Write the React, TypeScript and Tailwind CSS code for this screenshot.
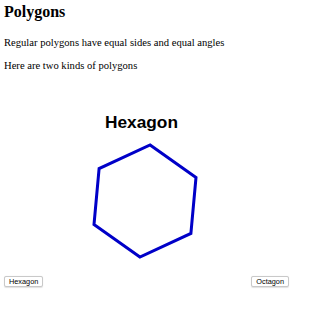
const hexPoints = '146.1,10 192,42.4 186.9,98.4 135.9,122 90,89.6 95.1,33.6'

const ShapeButton = ({ label }: { label: string }) => {
  return (
    <button className="h-[11px] px-[4px] border border-[#c9c9c9] rounded-[2px] bg-white text-[7.33px] leading-[9px] text-black shadow-[0_0.5px_1px_rgba(0,0,0,0.12)] font-['Liberation_Sans',Arial,sans-serif]">
      {label}
    </button>
  )
}

export default function App() {
  return (
    <div className="w-[318px] h-[320px] bg-white pl-[4px] text-black overflow-hidden">
      <h2 className="pt-[3px] text-[16px] leading-[18px] font-bold font-['Liberation_Serif','Times_New_Roman',serif]">
        Polygons
      </h2>

      <p className="mt-[16px] text-[10.6px] leading-[12px] font-['Liberation_Serif','Times_New_Roman',serif]">
        Regular polygons have equal sides and equal angles
      </p>
      <p className="mt-[10.6px] text-[10.6px] leading-[12px] font-['Liberation_Serif','Times_New_Roman',serif]">
        Here are two kinds of polygons
      </p>

      <div className="w-[285px] mt-[40px]">
        <div className="w-[275px] text-center text-[17.3px] leading-[20px] font-bold font-['Liberation_Sans',Arial,sans-serif]">
          Hexagon
        </div>
        <svg width="285" height="130" viewBox="0 0 285 130" className="mt-[3.5px] block">
          <polygon points={hexPoints} fill="none" stroke="#0000c8" strokeWidth="3" strokeLinejoin="miter" />
        </svg>
        <div className="flex justify-between mt-[11px]">
          <ShapeButton label="Hexagon" />
          <ShapeButton label="Octagon" />
        </div>
      </div>
    </div>
  )
}
